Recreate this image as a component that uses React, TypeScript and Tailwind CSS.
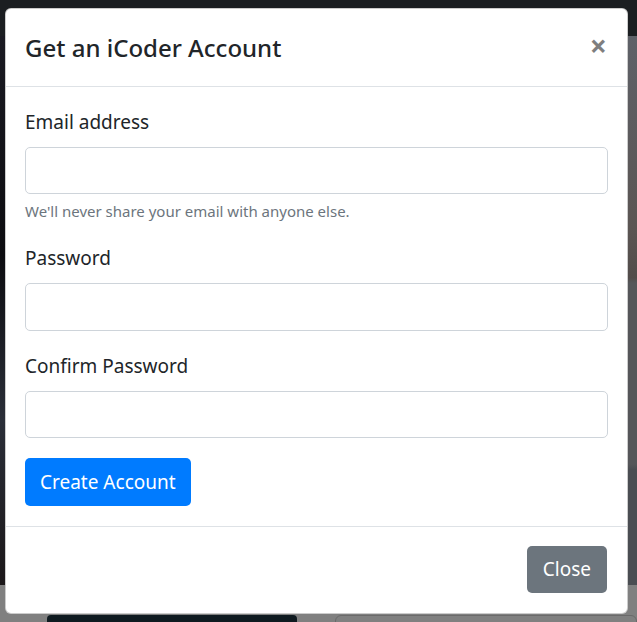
import React from "react";

const font = { fontFamily: '"Noto Sans", "Open Sans", "Liberation Sans", sans-serif' };

function Field({ label, help }: { label: string; help?: string }) {
  return (
    <div className="mb-[20px]">
      <label className="block mb-[10px] text-[19px] leading-[30px] text-[#212529]">{label}</label>
      <input
        className="block w-full h-[47.5px] rounded-[5px] border border-[#ced4da] bg-white px-[15px] text-[19px] outline-none"
        type="text"
      />
      {help && (
        <small className="block mt-[5px] text-[15px] leading-[24px] text-[#6c757d]">{help}</small>
      )}
    </div>
  );
}

export default function App() {
  return (
    <div className="relative w-[637px] h-[622px] overflow-hidden bg-[#808080]" style={font}>
      {/* background page (dimmed) */}
      <div className="flex flex-col h-full">
        <div className="h-[36px] shrink-0 bg-[#1b1e21]" />
        <div className="h-[549px] shrink-0 bg-[linear-gradient(180deg,#1a1a22_0%,#0c0c10_40%,#2a2e38_70%,#1b1719_100%)] flex">
          <div className="flex-1" />
          <div className="w-[14px] bg-[linear-gradient(180deg,#5e6168_0%,#5b5553_35%,#524c4a_44%,#555659_45%,#555659_78%,#4a4d52_79%,#4a4d52_100%)]" />
        </div>
        <div className="flex-1 flex pt-[30px] pl-[47px] gap-[38px]">
          <div className="w-[250px] h-[20px] rounded-t-[4px] bg-[#0f1a20]" />
          <div className="flex-1 h-[20px] rounded-t-[6px] border border-[#6a6a6a]" />
        </div>
      </div>

      {/* modal */}
      <div className="absolute left-[5px] top-[8px] w-[623px] rounded-[6px] border border-black/20 bg-white">
        <div className="flex items-start justify-between px-[19px] pt-[20px] pb-[19px] border-b border-[#dee2e6]">
          <h5 className="text-[24px] leading-[37.5px] font-medium text-[#212529]">Get an iCoder Account</h5>
          <button className="text-[30px] leading-[37.5px] font-bold text-black opacity-50 mr-[1px] mt-[-2px]">×</button>
        </div>
        <div className="px-[19px] pt-[20px] pb-[20px]">
          <Field label="Email address" help="We'll never share your email with anyone else." />
          <Field label="Password" />
          <Field label="Confirm Password" />
          <button className="h-[47.5px] px-[15px] rounded-[5px] bg-[#007bff] text-white text-[19px] leading-[30px]">
            Create Account
          </button>
        </div>
        <div className="flex justify-end p-[15px] pt-[14px] border-t border-[#dee2e6]">
          <button className="m-[5px] h-[47.5px] px-[16px] rounded-[5px] bg-[#6c757d] text-white text-[19px] leading-[30px]">
            Close
          </button>
        </div>
      </div>
    </div>
  );
}
